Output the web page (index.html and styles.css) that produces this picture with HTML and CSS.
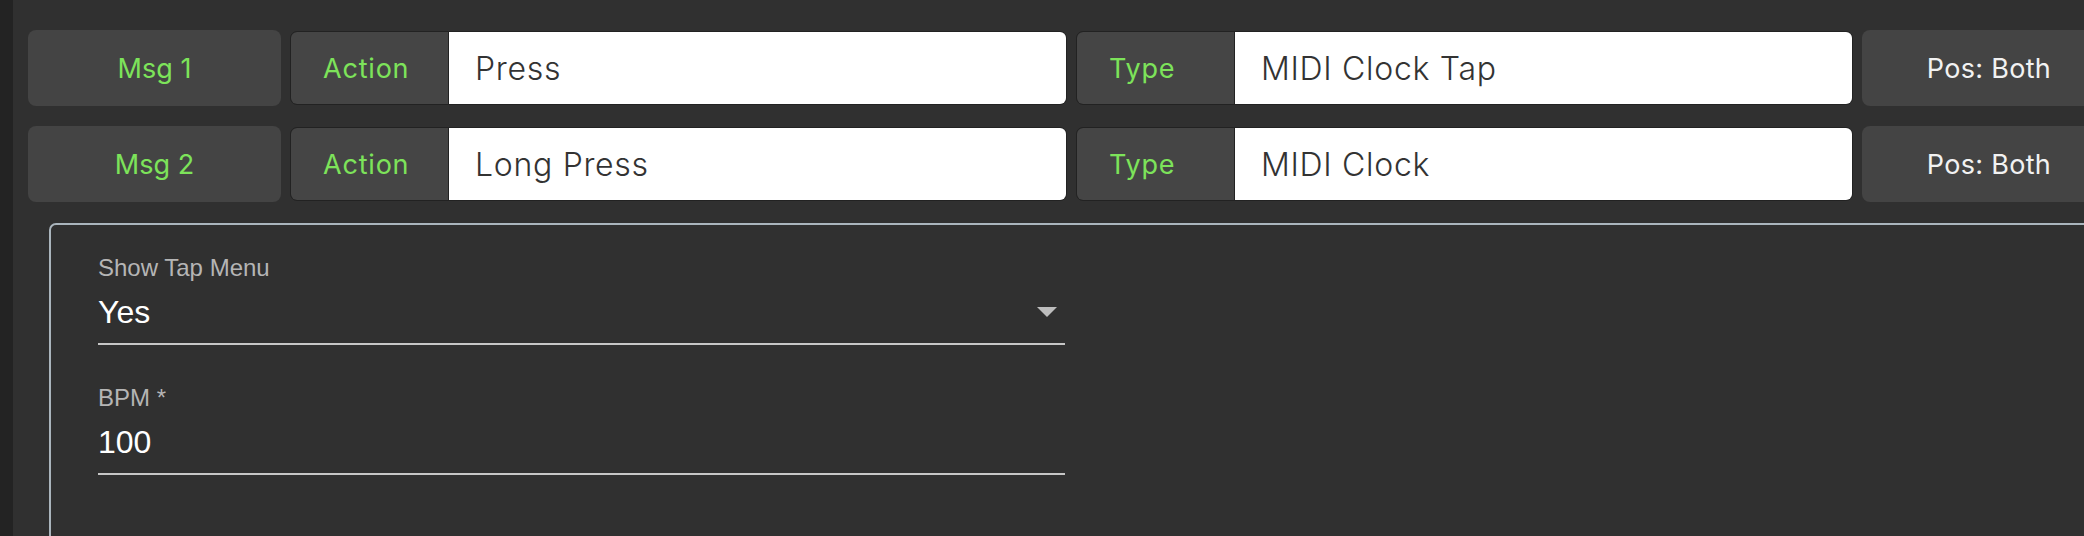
FILE: index.html
```html
<!DOCTYPE html>
<html lang="en">
<head>
<meta charset="utf-8">
<title>Messages</title>
<link rel="stylesheet" href="styles.css">
</head>
<body>
<div class="app">
  <div class="sidebar"></div>
  <div class="main">
    <div class="msg-row">
      <div class="msg-tag">Msg 1</div>
      <div class="group">
        <span class="group-label">Action</span>
        <div class="group-input">Press</div>
      </div>
      <div class="group">
        <span class="group-label">Type</span>
        <div class="group-input">MIDI Clock Tap</div>
      </div>
      <div class="pos-tag">Pos: Both</div>
    </div>
    <div class="msg-row">
      <div class="msg-tag">Msg 2</div>
      <div class="group">
        <span class="group-label">Action</span>
        <div class="group-input">Long Press</div>
      </div>
      <div class="group">
        <span class="group-label">Type</span>
        <div class="group-input">MIDI Clock</div>
      </div>
      <div class="pos-tag">Pos: Both</div>
    </div>
    <div class="panel">
      <div class="field">
        <div class="field-label">Show Tap Menu</div>
        <div class="field-input">
          <span>Yes</span>
          <span class="caret"></span>
        </div>
      </div>
      <div class="field">
        <div class="field-label">BPM *</div>
        <div class="field-input">
          <span>100</span>
        </div>
      </div>
    </div>
  </div>
</div>
</body>
</html>
```
FILE: styles.css
```css
html, body {
  margin: 0;
  padding: 0;
  background: #303030;
  overflow: hidden;
}

.app {
  display: flex;
  height: 536px;
  overflow: hidden;
}

.sidebar {
  flex: none;
  width: 13px;
  background: #232323;
}

.main {
  flex: 1;
  min-width: 0;
  padding: 30px 0 0 15px;
}

.msg-row {
  display: flex;
  align-items: center;
  gap: 9px;
  height: 76px;
  margin-bottom: 20px;
  font-family: Inter, "Open Sans", sans-serif;
}

.msg-tag,
.pos-tag {
  flex: none;
  width: 253px;
  height: 76px;
  box-sizing: border-box;
  background: #444444;
  border-radius: 8px;
  display: flex;
  align-items: center;
  justify-content: center;
  font-size: 27px;
}

.msg-tag {
  color: #7de35a;
}

.pos-tag {
  width: 254px;
  color: #f2f2f2;
  letter-spacing: 0.3px;
}

.group {
  flex: none;
  width: 777px;
  height: 74px;
  box-sizing: border-box;
  display: flex;
  border: 1px solid #222222;
  border-radius: 7px;
  overflow: hidden;
}

.group-label {
  flex: none;
  width: 158px;
  box-sizing: border-box;
  padding-left: 32px;
  display: flex;
  align-items: center;
  background: #454545;
  border-right: 1px solid #222222;
  border-radius: 6px 0 0 6px;
  color: #7de35a;
  font-size: 27px;
  letter-spacing: 0.8px;
}

.group-input {
  flex: 1;
  display: flex;
  align-items: center;
  padding-left: 26px;
  background: #ffffff;
  color: #333333;
  font-size: 32px;
  font-weight: 300;
  letter-spacing: 0.7px;
}

.panel {
  margin: 21px -40px 0 21px;
  height: 320px;
  border: 2px solid #aab5bd;
  border-radius: 7px;
  padding: 31px 0 0 47px;
  font-family: "Liberation Sans", Arial, sans-serif;
}

.field {
  width: 967px;
  margin-bottom: 41px;
}

.field-label {
  font-size: 24px;
  line-height: 24px;
  color: #b5b5b5;
}

.field-input {
  margin-top: 9px;
  height: 46px;
  padding: 0 8px 8px 0;
  display: flex;
  align-items: center;
  justify-content: space-between;
  border-bottom: 2px solid #c6c6c6;
  font-size: 32px;
  line-height: 46px;
  color: #ffffff;
}

.caret {
  width: 0;
  height: 0;
  border-left: 10px solid transparent;
  border-right: 10px solid transparent;
  border-top: 10px solid #bdbdbd;
}
```
